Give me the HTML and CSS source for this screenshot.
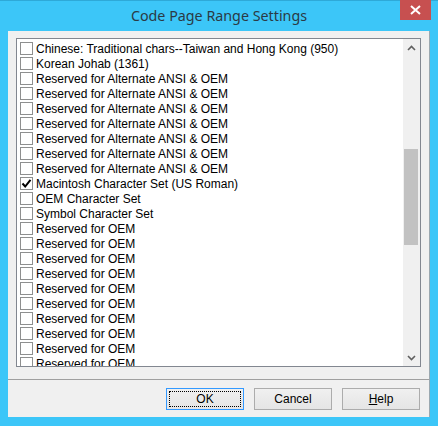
FILE: index.html
```html
<!DOCTYPE html>
<html>
<head>
<meta charset="utf-8">
<link rel="stylesheet" href="styles.css">
</head>
<body>
<div class="window">
  <div class="titlebar">
    <span></span>
    <span class="title">Code Page Range Settings</span>
    <span class="close"><svg width="11" height="10" viewBox="0 0 11 10"><path d="M1 1 L10 9 M10 1 L1 9" stroke="#fff" stroke-width="2" fill="none"/></svg></span>
  </div>
  <div class="client">
    <div class="content">
      <div class="listbox">
        <div class="items">
          <div class="row"><span class="box"></span><span>Chinese: Traditional chars--Taiwan and Hong Kong (950)</span></div>
          <div class="row"><span class="box"></span><span>Korean Johab (1361)</span></div>
          <div class="row"><span class="box"></span><span>Reserved for Alternate ANSI &amp; OEM</span></div>
          <div class="row"><span class="box"></span><span>Reserved for Alternate ANSI &amp; OEM</span></div>
          <div class="row"><span class="box"></span><span>Reserved for Alternate ANSI &amp; OEM</span></div>
          <div class="row"><span class="box"></span><span>Reserved for Alternate ANSI &amp; OEM</span></div>
          <div class="row"><span class="box"></span><span>Reserved for Alternate ANSI &amp; OEM</span></div>
          <div class="row"><span class="box"></span><span>Reserved for Alternate ANSI &amp; OEM</span></div>
          <div class="row"><span class="box"></span><span>Reserved for Alternate ANSI &amp; OEM</span></div>
          <div class="row"><span class="box checked"><svg width="11" height="11" viewBox="0 0 11 11"><path d="M1.5 5.5 L4.2 8.5 L9.5 1.8" stroke="#000" stroke-width="2" fill="none"/></svg></span><span>Macintosh Character Set (US Roman)</span></div>
          <div class="row"><span class="box"></span><span>OEM Character Set</span></div>
          <div class="row"><span class="box"></span><span>Symbol Character Set</span></div>
          <div class="row"><span class="box"></span><span>Reserved for OEM</span></div>
          <div class="row"><span class="box"></span><span>Reserved for OEM</span></div>
          <div class="row"><span class="box"></span><span>Reserved for OEM</span></div>
          <div class="row"><span class="box"></span><span>Reserved for OEM</span></div>
          <div class="row"><span class="box"></span><span>Reserved for OEM</span></div>
          <div class="row"><span class="box"></span><span>Reserved for OEM</span></div>
          <div class="row"><span class="box"></span><span>Reserved for OEM</span></div>
          <div class="row"><span class="box"></span><span>Reserved for OEM</span></div>
          <div class="row"><span class="box"></span><span>Reserved for OEM</span></div>
          <div class="row"><span class="box"></span><span>Reserved for OEM</span></div>
        </div>
        <div class="scrollbar">
          <div class="arrow"><svg width="9" height="6" viewBox="0 0 9 6"><path d="M1 5 L4.5 1.5 L8 5" stroke="#606060" stroke-width="1.6" fill="none"/></svg></div>
          <div class="track"><div class="thumb"></div></div>
          <div class="arrow"><svg width="9" height="6" viewBox="0 0 9 6"><path d="M1 1 L4.5 4.5 L8 1" stroke="#606060" stroke-width="1.6" fill="none"/></svg></div>
        </div>
      </div>
    </div>
    <div class="footer">
      <button class="btn default"><span class="focus">OK</span></button>
      <button class="btn"><span>Cancel</span></button>
      <button class="btn"><span><u>H</u>elp</span></button>
    </div>
  </div>
</div>
</body>
</html>
```
FILE: styles.css
```css
html, body {
  margin: 0;
  padding: 0;
}
body {
  width: 438px;
  height: 426px;
  overflow: hidden;
  background: #3cc6f8;
}
.window {
  width: 438px;
  height: 426px;
  box-sizing: border-box;
  background: #3cc6f8;
  border-top: 1px solid #2ea9d8;
  display: flex;
  flex-direction: column;
}
.titlebar {
  height: 30px;
  display: grid;
  grid-template-columns: 1fr auto 1fr;
  align-items: start;
}
.title {
  font-family: "Noto Sans", sans-serif;
  font-size: 14.3px;
  color: #2b3a45;
  margin-top: 5px;
  line-height: 20px;
}
.close {
  justify-self: end;
  margin-right: 7px;
  margin-top: -1px;
  width: 31px;
  height: 20px;
  background: #c75050;
  display: flex;
  align-items: center;
  justify-content: center;
}
.close svg { display: block; }
.client {
  margin: 0 8px 0 8px;
  width: 422px;
  height: 386px;
  box-sizing: border-box;
  background: #f0f0f0;
  border-right: 1px solid #9aa8b0;
  display: flex;
  flex-direction: column;
}
.content {
  padding: 7px 8px 12px 8px;
}
.listbox {
  width: 405px;
  height: 329px;
  box-sizing: border-box;
  border: 1px solid #828790;
  background: #fff;
  display: flex;
  overflow: hidden;
}
.items {
  flex: 1;
  padding: 2px 0 0 3px;
  overflow: hidden;
  font-family: "Liberation Sans", Arial, sans-serif;
  font-size: 12px;
  color: #000;
}
.row {
  height: 15px;
  display: flex;
  align-items: center;
  gap: 3px;
  white-space: nowrap;
}
.box {
  width: 13px;
  height: 13px;
  box-sizing: border-box;
  border: 1px solid #8e8f8f;
  background: #fff;
  flex: none;
  display: flex;
  align-items: center;
  justify-content: center;
}
.box svg { display: block; }
.scrollbar {
  width: 17px;
  flex: none;
  background: #f0f0f0;
  display: flex;
  flex-direction: column;
}
.arrow {
  height: 17px;
  display: flex;
  align-items: center;
  justify-content: center;
}
.arrow svg { display: block; }
.track {
  flex: 1;
  padding: 93px 1px 0 1px;
}
.thumb {
  height: 96px;
  background: #c2c2c2;
  margin-right: 1px;
}
.footer {
  flex: 1;
  border-top: 1px solid #a0a0a0;
  display: flex;
  justify-content: flex-end;
  align-items: flex-start;
  gap: 10px;
  padding: 8px 9px 0 0;
}
.btn {
  width: 78px;
  height: 22px;
  box-sizing: border-box;
  margin: 0;
  padding: 2px;
  border: 1px solid #acacac;
  background: linear-gradient(#f0f0f0, #e5e5e5);
  font-family: "Liberation Sans", Arial, sans-serif;
  font-size: 12px;
  color: #000;
  display: flex;
  align-items: stretch;
  justify-content: stretch;
}
.btn span {
  flex: 1;
  display: flex;
  align-items: center;
  justify-content: center;
  border: 1px solid transparent;
}
.btn.default {
  border-color: #3399ff;
}
.btn .focus {
  border: 1px dotted #000;
}
```
